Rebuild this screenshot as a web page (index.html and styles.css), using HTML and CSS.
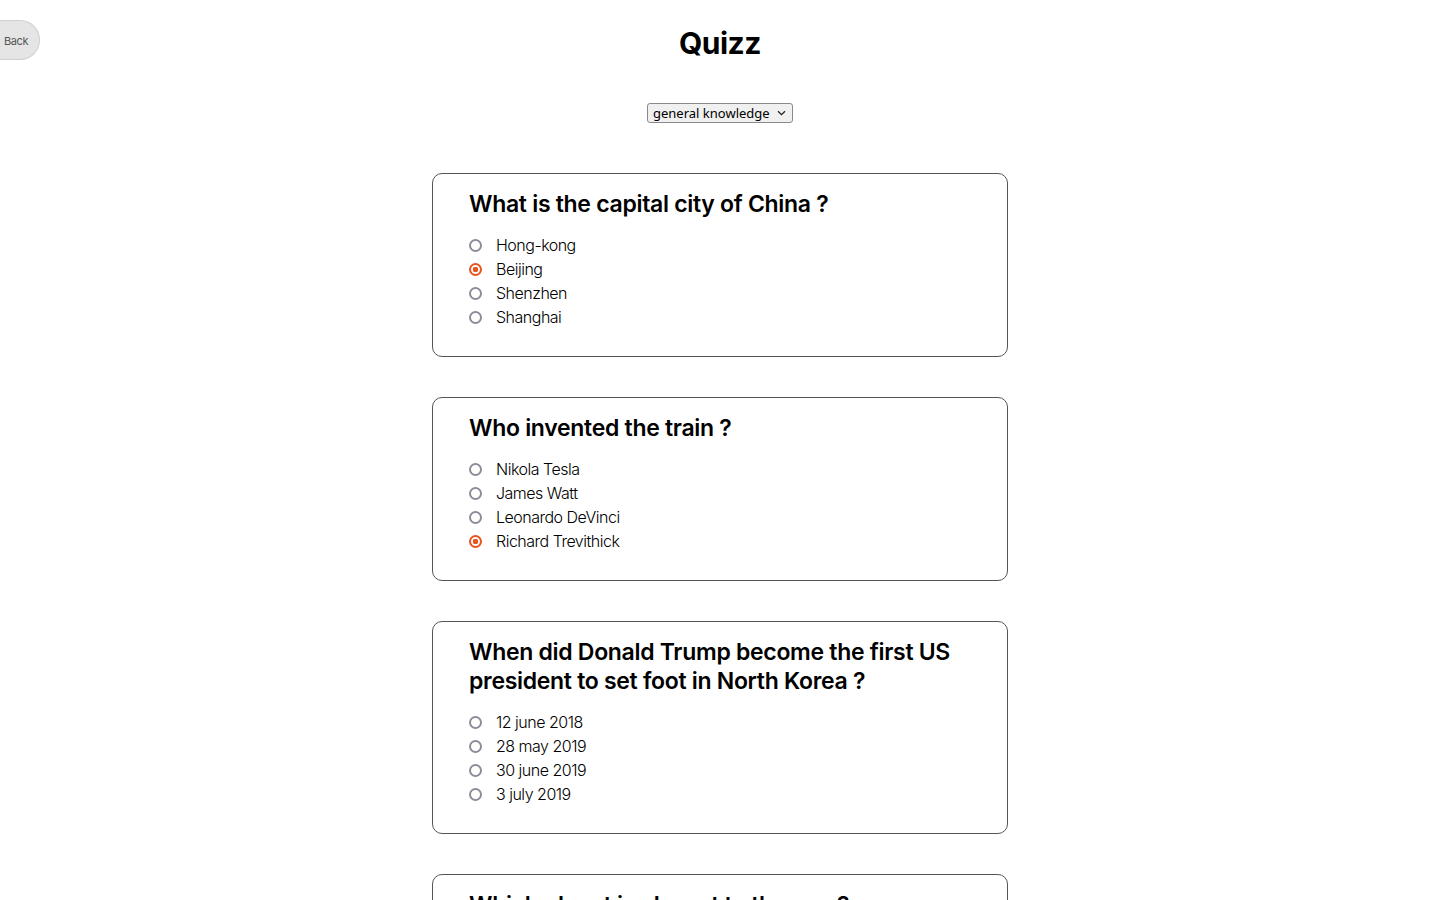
FILE: index.html
```html
<!DOCTYPE html>
<html lang="en">
<head>
<meta charset="utf-8">
<title>Quizz</title>
<link rel="stylesheet" href="styles.css">
</head>
<body>
<header class="top">
  <button class="back">Back</button>
  <h1 class="title">Quizz</h1>
  <span></span>
</header>
<div class="picker">
  <div class="select-wrap">
    <select class="category">
      <option>general knowledge</option>
    </select>
    <svg class="chevron" width="9" height="6" viewBox="0 0 9 6"><path d="M1 1.2 L4.5 4.6 L8 1.2" fill="none" stroke="#222" stroke-width="1.3"/></svg>
  </div>
</div>
<main class="quiz">
  <section class="card">
    <h2 class="question">What is the capital city of China ?</h2>
    <label class="option"><input type="radio" name="q1"> Hong-kong</label>
    <label class="option"><input type="radio" name="q1" checked> Beijing</label>
    <label class="option"><input type="radio" name="q1"> Shenzhen</label>
    <label class="option"><input type="radio" name="q1"> Shanghai</label>
  </section>
  <section class="card">
    <h2 class="question">Who invented the train ?</h2>
    <label class="option"><input type="radio" name="q2"> Nikola Tesla</label>
    <label class="option"><input type="radio" name="q2"> James Watt</label>
    <label class="option"><input type="radio" name="q2"> Leonardo DeVinci</label>
    <label class="option"><input type="radio" name="q2" checked> Richard Trevithick</label>
  </section>
  <section class="card">
    <h2 class="question">When did Donald Trump become the first US president to set foot in North Korea ?</h2>
    <label class="option"><input type="radio" name="q3"> 12 june 2018</label>
    <label class="option"><input type="radio" name="q3"> 28 may 2019</label>
    <label class="option"><input type="radio" name="q3"> 30 june 2019</label>
    <label class="option"><input type="radio" name="q3"> 3 july 2019</label>
  </section>
  <section class="card">
    <h2 class="question">Which planet is closest to the sun ?</h2>
    <label class="option"><input type="radio" name="q4"> Mercury</label>
    <label class="option"><input type="radio" name="q4"> Venus</label>
    <label class="option"><input type="radio" name="q4"> Mars</label>
    <label class="option"><input type="radio" name="q4"> Earth</label>
  </section>
</main>
</body>
</html>
```
FILE: styles.css
```css
html, body {
  margin: 0;
  padding: 0;
  background: #ffffff;
}
body {
  font-family: Inter, "Noto Sans", sans-serif;
  color: #000;
}
.top {
  display: grid;
  grid-template-columns: 1fr auto 1fr;
  align-items: start;
  padding-top: 20px;
}
.back {
  justify-self: start;
  width: 40px;
  height: 40px;
  margin: 0;
  padding: 1px 0 0 4px;
  text-align: left;
  background: #e5e5e5;
  border: 1px solid #cfcfcf;
  border-left: none;
  border-radius: 0 20px 20px 0;
  font-family: Inter, sans-serif;
  font-size: 11px;
  color: #555;
  letter-spacing: -0.4px;
}
.title {
  margin: 3px 0 0;
  font-size: 30px;
  font-weight: 700;
  letter-spacing: -0.5px;
  line-height: 40px;
}
.picker {
  display: flex;
  justify-content: center;
  margin-top: 40px;
}
.select-wrap {
  position: relative;
  display: flex;
}
.category {
  appearance: none;
  -webkit-appearance: none;
  box-sizing: border-box;
  width: 146px;
  font-family: "Noto Sans", sans-serif;
  font-size: 13px;
  height: 20px;
  padding: 0 0 0 5px;
  border: 1px solid #8a8a8a;
  border-radius: 3px;
  background: #f0f0f0;
  color: #000;
  line-height: 18px;
}
.chevron {
  position: absolute;
  right: 7px;
  top: 7px;
  pointer-events: none;
}
.quiz {
  display: flex;
  flex-direction: column;
  align-items: center;
  gap: 40px;
  margin-top: 50px;
}
.card {
  box-sizing: border-box;
  width: 576px;
  border: 1px solid #555;
  border-radius: 10px;
  padding: 16px 36px 27px;
  display: flex;
  flex-direction: column;
}
.question {
  margin: 0 0 14px;
  font-size: 23px;
  font-weight: 600;
  line-height: 29px;
  letter-spacing: -0.3px;
}
.option {
  display: flex;
  align-items: center;
  height: 24px;
  font-size: 16px;
  font-weight: 300;
  letter-spacing: -0.5px;
}
.option input {
  appearance: none;
  -webkit-appearance: none;
  box-sizing: border-box;
  margin: 0 14px 0 0;
  width: 13px;
  height: 13px;
  border: 2px solid #8e8c99;
  border-radius: 50%;
  background: #fff;
  flex: none;
}
.option input:checked {
  border-color: #e95420;
  background: radial-gradient(circle, #e95420 0 2.6px, #fff 3px);
}
```
